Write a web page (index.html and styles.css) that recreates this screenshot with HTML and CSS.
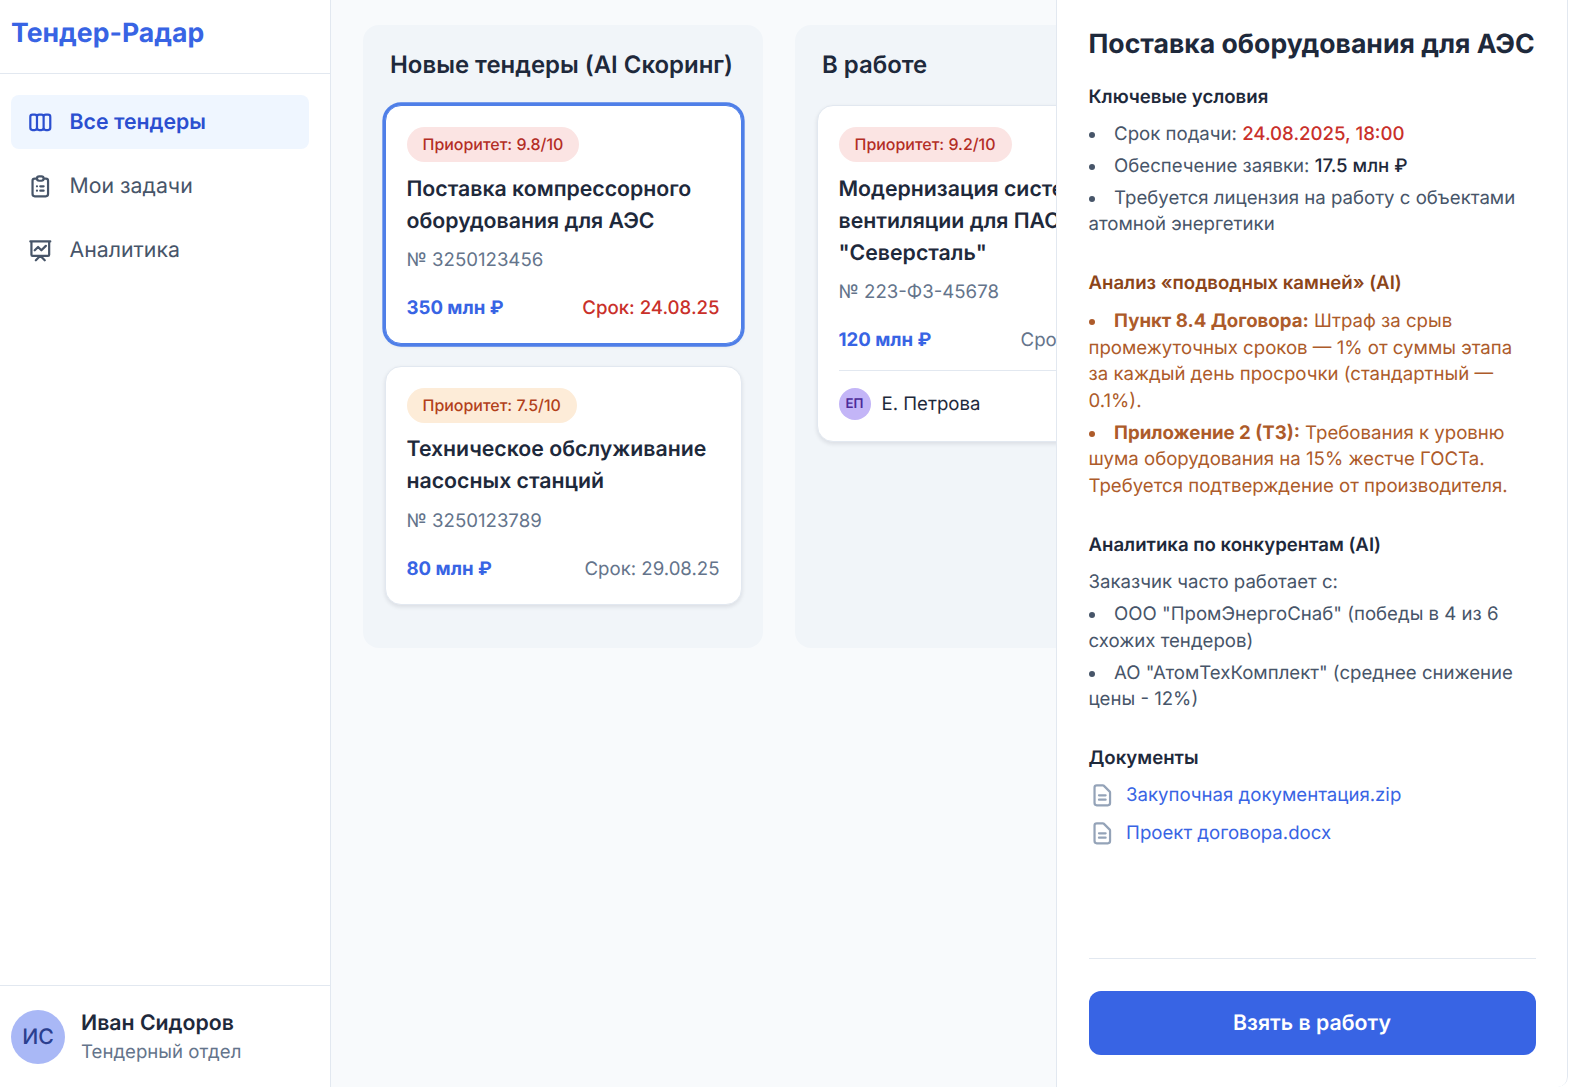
FILE: index.html
```html
<!DOCTYPE html>
<html lang="ru">
<head>
    <meta charset="UTF-8"/>
    <title>Тендер-Радар</title>
    <link rel="stylesheet" href="styles.css">
</head>
<body>
<div class="app">

    <aside class="sidebar">
        <div class="logo">Тендер-Радар</div>
        <nav class="nav">
            <a class="nav-item active">
                <svg class="nav-icon" viewBox="0 0 24 24" fill="none" stroke="currentColor" stroke-width="2" stroke-linecap="round" stroke-linejoin="round">
                    <path d="M9 17V7m0 10a2 2 0 01-2 2H5a2 2 0 01-2-2V7a2 2 0 012-2h2a2 2 0 012 2m0 10a2 2 0 002 2h2a2 2 0 002-2M9 7a2 2 0 012-2h2a2 2 0 012 2m0 10V7m0 10a2 2 0 002 2h2a2 2 0 002-2V7a2 2 0 00-2-2h-2a2 2 0 00-2 2"/>
                </svg>
                Все тендеры
            </a>
            <a class="nav-item">
                <svg class="nav-icon" viewBox="0 0 24 24" fill="none" stroke="currentColor" stroke-width="2" stroke-linecap="round" stroke-linejoin="round">
                    <path d="M9 5H7a2 2 0 00-2 2v12a2 2 0 002 2h10a2 2 0 002-2V7a2 2 0 00-2-2h-2M9 5a2 2 0 002 2h2a2 2 0 002-2M9 5a2 2 0 012-2h2a2 2 0 012 2m-3 7h3m-3 4h3m-6-4h.01M9 16h.01"/>
                </svg>
                Мои задачи
            </a>
            <a class="nav-item">
                <svg class="nav-icon" viewBox="0 0 24 24" fill="none" stroke="currentColor" stroke-width="2" stroke-linecap="round" stroke-linejoin="round">
                    <path d="M7 12l3-3 3 3 4-4M8 21l4-4 4 4M3 4h18M4 4h16v12a1 1 0 01-1 1H5a1 1 0 01-1-1V4z"/>
                </svg>
                Аналитика
            </a>
        </nav>
        <div class="user">
            <div class="user-avatar">ИС</div>
            <div>
                <div class="user-name">Иван Сидоров</div>
                <div class="user-role">Тендерный отдел</div>
            </div>
        </div>
    </aside>

    <main class="board">
        <section class="column">
            <h2 class="column-title">Новые тендеры (AI Скоринг)</h2>
            <div class="card selected">
                <span class="badge badge-high">Приоритет: 9.8/10</span>
                <h3 class="card-title">Поставка компрессорного оборудования для АЭС</h3>
                <div class="card-number">№ 3250123456</div>
                <div class="card-row">
                    <span class="card-price">350 млн ₽</span>
                    <span class="card-date urgent">Срок: 24.08.25</span>
                </div>
            </div>
            <div class="card">
                <span class="badge badge-mid">Приоритет: 7.5/10</span>
                <h3 class="card-title">Техническое обслуживание насосных станций</h3>
                <div class="card-number">№ 3250123789</div>
                <div class="card-row">
                    <span class="card-price">80 млн ₽</span>
                    <span class="card-date">Срок: 29.08.25</span>
                </div>
            </div>
        </section>

        <section class="column">
            <h2 class="column-title">В работе</h2>
            <div class="card">
                <span class="badge badge-high">Приоритет: 9.2/10</span>
                <h3 class="card-title">Модернизация системы вентиляции для ПАО "Северсталь"</h3>
                <div class="card-number">№ 223-ФЗ-45678</div>
                <div class="card-row">
                    <span class="card-price">120 млн ₽</span>
                    <span class="card-date">Срок: 15.09.25</span>
                </div>
                <div class="card-owner">
                    <div class="owner-avatar">ЕП</div>
                    Е. Петрова
                </div>
            </div>
        </section>
    </main>

    <aside class="details">
        <h1 class="details-title">Поставка оборудования для АЭС</h1>

        <h4 class="details-heading first">Ключевые условия</h4>
        <ul class="details-list">
            <li>Срок подачи: <span class="urgent-value">24.08.2025, 18:00</span></li>
            <li>Обеспечение заявки: <span class="strong-value">17.5 млн ₽</span></li>
            <li>Требуется лицензия на работу с объектами атомной энергетики</li>
        </ul>

        <h4 class="details-heading warn-heading">Анализ «подводных камней» (AI)</h4>
        <ul class="details-list warn-list">
            <li><b>Пункт 8.4 Договора:</b> Штраф за срыв промежуточных сроков — 1% от суммы этапа за каждый день просрочки (стандартный — 0.1%).</li>
            <li><b>Приложение 2 (ТЗ):</b> Требования к уровню шума оборудования на 15% жестче ГОСТа. Требуется подтверждение от производителя.</li>
        </ul>

        <h4 class="details-heading">Аналитика по конкурентам (AI)</h4>
        <p class="details-text">Заказчик часто работает с:</p>
        <ul class="details-list">
            <li>ООО "ПромЭнергоСнаб" (победы в 4 из 6 схожих тендеров)</li>
            <li>АО "АтомТехКомплект" (среднее снижение цены - 12%)</li>
        </ul>

        <h4 class="details-heading">Документы</h4>
        <div class="doc-list">
            <a class="doc-link">
                <svg class="doc-icon" viewBox="0 0 24 24" fill="none" stroke="currentColor" stroke-width="2" stroke-linecap="round" stroke-linejoin="round">
                    <path d="M9 12h6m-6 4h6m2 5H7a2 2 0 01-2-2V5a2 2 0 012-2h5.586a1 1 0 01.707.293l5.414 5.414a1 1 0 01.293.707V19a2 2 0 01-2 2z"/>
                </svg>
                Закупочная документация.zip
            </a>
            <a class="doc-link">
                <svg class="doc-icon" viewBox="0 0 24 24" fill="none" stroke="currentColor" stroke-width="2" stroke-linecap="round" stroke-linejoin="round">
                    <path d="M9 12h6m-6 4h6m2 5H7a2 2 0 01-2-2V5a2 2 0 012-2h5.586a1 1 0 01.707.293l5.414 5.414a1 1 0 01.293.707V19a2 2 0 01-2 2z"/>
                </svg>
                Проект договора.docx
            </a>
        </div>

        <div class="details-footer">
            <button class="take-button">Взять в работу</button>
        </div>
    </aside>

</div>
</body>
</html>
```

FILE: styles.css
```css
* {
  box-sizing: border-box;
}
html, body {
  margin: 0;
  background: #fff;
}
body {
  font-family: Inter, "Noto Sans", sans-serif;
  color: #1e293b;
  overflow: hidden;
  text-rendering: geometricPrecision;
}
.app {
  display: flex;
  width: 1568px;
  height: 1087px;
  background: #f8fafc;
  border-bottom-right-radius: 10px;
  overflow: hidden;
}

/* Left sidebar */
.sidebar {
  width: 331px;
  flex-shrink: 0;
  display: flex;
  flex-direction: column;
  background: #fff;
  border-right: 1px solid #e2e8f0;
}
.logo {
  height: 74px;
  padding: 15px 11px 0;
  font-size: 26.6px;
  line-height: 36px;
  font-weight: 700;
  color: #3864e4;
  border-bottom: 1px solid #e2e8f0;
}
.nav {
  flex: 1;
  padding: 21px 21px 0 11px;
  display: flex;
  flex-direction: column;
  gap: 10px;
}
.nav-item {
  display: flex;
  align-items: center;
  gap: 16px;
  height: 54px;
  padding: 0 16px;
  border-radius: 8px;
  font-size: 21.28px;
  color: #475569;
}
.nav-item.active {
  background: #eff6ff;
  color: #2b4fd0;
  font-weight: 600;
}
.nav-icon {
  width: 26.6px;
  height: 26.6px;
  flex-shrink: 0;
}
.user {
  height: 102px;
  display: flex;
  align-items: center;
  gap: 16px;
  padding: 0 11px;
  border-top: 1px solid #e2e8f0;
}
.user-avatar {
  width: 54px;
  height: 54px;
  border-radius: 50%;
  background: #a9b8f6;
  color: #2b3f8f;
  font-size: 21.28px;
  font-weight: 500;
  display: flex;
  align-items: center;
  justify-content: center;
}
.user-name {
  font-size: 21.28px;
  line-height: 30px;
  font-weight: 600;
}
.user-role {
  font-size: 18.62px;
  line-height: 28px;
  color: #64748b;
}

/* Kanban board */
.board {
  flex: 1;
  min-width: 0;
  display: flex;
  align-items: flex-start;
  gap: 32px;
  padding: 25px 32px;
  overflow: hidden;
}
.column {
  width: 400px;
  flex-shrink: 0;
  height: 623px;
  padding: 22px 21.5px 0;
  background: #f1f5f9;
  border-radius: 16px;
}
.column-title {
  margin: 0 0 22px 5.5px;
  font-size: 23.94px;
  line-height: 36px;
  font-weight: 600;
}
.card {
  margin-bottom: 21.6px;
  padding: 21px 21px;
  background: #fff;
  border: 1px solid #e2e8f0;
  border-radius: 16px;
  box-shadow: 0 2px 4px rgba(15, 23, 42, 0.1);
}
.card.selected {
  border-color: #4f7fe8;
  box-shadow: 0 0 0 2.66px #4f7fe8, 0 2px 4px rgba(15, 23, 42, 0.1);
}
.badge {
  display: inline-block;
  height: 35px;
  padding: 0 16px;
  border-radius: 18px;
  font-size: 15.96px;
  line-height: 36px;
  font-weight: 500;
  vertical-align: top;
}
.badge-high {
  background: #fbe4e3;
  color: #b32d25;
}
.badge-mid {
  background: #fdecd8;
  color: #b2401a;
}
.card-title {
  margin: 10.6px 0 7.4px;
  font-size: 21.28px;
  line-height: 32px;
  font-weight: 600;
}
.card-number {
  font-size: 18.62px;
  line-height: 32px;
  color: #64748b;
}
.card-row {
  display: flex;
  justify-content: space-between;
  align-items: center;
  margin-top: 18px;
  white-space: nowrap;
  font-size: 18.62px;
  line-height: 28px;
}
.card-price {
  font-weight: 700;
  color: #3864e4;
}
.card-date {
  color: #64748b;
}
.card-date.urgent {
  color: #c9302a;
  font-weight: 500;
}
.card-owner {
  display: flex;
  align-items: center;
  gap: 11px;
  margin-top: 16px;
  padding-top: 17px;
  border-top: 1px solid #e2e8f0;
  font-size: 18.62px;
}
.owner-avatar {
  width: 32px;
  height: 32px;
  border-radius: 50%;
  background: #c3b5f7;
  color: #4c2a99;
  font-size: 13.3px;
  font-weight: 600;
  display: flex;
  align-items: center;
  justify-content: center;
}

/* Right details panel */
.details {
  width: 512px;
  flex-shrink: 0;
  display: flex;
  flex-direction: column;
  padding: 24px 31.5px 32px;
  background: #fff;
  border-left: 1px solid #e2e8f0;
  border-right: 1px solid #e2e8f0;
  border-bottom-right-radius: 10px;
}
.details-title {
  margin: 0 0 20px;
  font-size: 26.6px;
  line-height: 40px;
  font-weight: 700;
  white-space: nowrap;
}
.details-heading {
  margin: 32px 0 11px;
  font-size: 18.62px;
  line-height: 26px;
  font-weight: 600;
}
.details-heading.first {
  margin-top: 0;
}
.warn-heading {
  margin-bottom: 12px;
  color: #8c4519;
}
.details-list {
  margin: 0;
  padding: 0;
  list-style-position: inside;
  font-size: 18.62px;
  line-height: 26.6px;
  color: #475569;
}
.details-list li {
  margin-bottom: 5.32px;
}
.details-list li:last-child {
  margin-bottom: 0;
}
.warn-list {
  margin-bottom: 1px;
  color: #ad5b2a;
}
.urgent-value {
  color: #c9302a;
  font-weight: 500;
}
.strong-value {
  color: #1e293b;
  font-weight: 500;
}
.details-text {
  margin: 0 0 5.32px;
  font-size: 18.62px;
  line-height: 26.6px;
  color: #475569;
}
.doc-list {
  display: flex;
  flex-direction: column;
  gap: 11px;
}
.doc-link {
  display: flex;
  align-items: center;
  gap: 11px;
  font-size: 18.62px;
  line-height: 26.6px;
  color: #3864e4;
}
.doc-icon {
  width: 26.6px;
  height: 26.6px;
  flex-shrink: 0;
  color: #94a3b8;
}
.details-footer {
  margin-top: auto;
  padding-top: 32px;
  border-top: 1px solid #e2e8f0;
}
.take-button {
  display: block;
  width: 100%;
  height: 64px;
  border: none;
  border-radius: 12px;
  background: #3864e4;
  color: #fff;
  font-family: inherit;
  font-size: 21.28px;
  font-weight: 600;
  text-rendering: geometricPrecision;
}
```
